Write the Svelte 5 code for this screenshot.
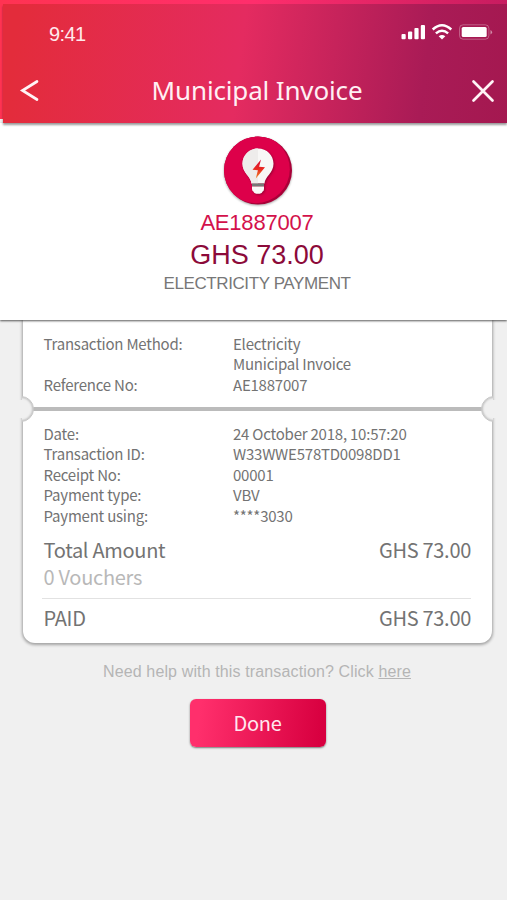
<script>
  let { onBack, onClose, onDone } = $props();

  const invoice = {
    code: 'AE1887007',
    amount: 'GHS 73.00',
    kind: 'ELECTRICITY PAYMENT'
  };

  const method = [
    { label: 'Transaction Method:', lines: ['Electricity', 'Municipal Invoice'] },
    { label: 'Reference No:', lines: ['AE1887007'] }
  ];

  const details = [
    { label: 'Date:', lines: ['24 October 2018, 10:57:20'] },
    { label: 'Transaction ID:', lines: ['W33WWE578TD0098DD1'] },
    { label: 'Receipt No:', lines: ['00001'] },
    { label: 'Payment type:', lines: ['VBV'] },
    { label: 'Payment using:', lines: ['****3030'] }
  ];
</script>

{#snippet rows(items)}
  <dl class="rows">
    {#each items as item}
      <div class="row">
        <dt>{item.label}</dt>
        <dd>
          {#each item.lines as line}
            <span>{line}</span>
          {/each}
        </dd>
      </div>
    {/each}
  </dl>
{/snippet}

<div class="screen">
  <header class="header">
    <div class="header__inner">
      <div class="status">
        <span class="status__time">9:41</span>
        <svg class="status__icons" width="92" height="20" viewBox="0 0 92 20">
          <g fill="#fff">
            <rect x="0.5" y="11" width="4.2" height="5.3" rx="1" />
            <rect x="7" y="8.4" width="4.2" height="7.9" rx="1" />
            <rect x="13.4" y="5" width="4.2" height="11.3" rx="1" />
            <rect x="19.8" y="2" width="4.2" height="14.3" rx="1" />
            <rect x="60.7" y="4" width="25" height="10" rx="1.6" />
            <path d="M89.5 7v4.4q1.6-.7 1.6-2.2T89.5 7z" opacity=".5" />
            <path d="M41 16.500l-3.300-3.300q3.300-2.500 6.600 0z" />
          </g>
          <g fill="none" stroke="#fff" stroke-width="2.5">
            <path d="M31.7 6.5q9.3-8.4 18.600 0" />
            <path d="M34.900 10.400q6.100-5.400 12.200 0" />
          </g>
          <rect x="58.5" y="1.8" width="29.4" height="14.4" rx="3.6" fill="none" stroke="#fff" stroke-opacity=".3" />
        </svg>
      </div>

      <div class="bar">
        <button class="bar__btn" type="button" aria-label="Back" onclick={onBack}>
          <svg width="22" height="24" viewBox="0 0 22 24">
            <path d="M18 2.500L3.500 11.500 18 20.500" />
          </svg>
        </button>
        <h1 class="bar__title">Municipal Invoice</h1>
        <button class="bar__btn" type="button" aria-label="Close" onclick={onClose}>
          <svg width="24" height="24" viewBox="0 0 24 24">
            <path d="M2.500 2.500l19 19M21.500 2.500l-19 19" />
          </svg>
        </button>
      </div>
    </div>
  </header>

  <section class="summary">
    <svg class="summary__icon" width="76" height="76" viewBox="0 0 76 76">
      <defs>
        <clipPath id="disc"><circle cx="38" cy="37.5" r="34" /></clipPath>
        <linearGradient id="bolt" x1="0" y1="1" x2="0" y2="0">
          <stop offset="0" stop-color="#f08a2a" />
          <stop offset=".5" stop-color="#e9281f" />
          <stop offset="1" stop-color="#d80b3a" />
        </linearGradient>
      </defs>
      <circle cx="38" cy="37.5" r="34" fill="#a90038" />
      <circle cx="35.8" cy="36.2" r="34" fill="#dd004a" clip-path="url(#disc)" />
      <g class="summary__bulb">
        <path d="M38 15.500c-8.800 0-15.500 6.700-15.500 15.300 0 9.200 8.500 12.700 9 19.700h13c.5-7 9-10.500 9-19.700 0-8.600-6.700-15.300-15.500-15.300z" fill="#f8f7f6" />
        <path d="M38 15.500c-8.800 0-15.500 6.700-15.500 15.300 0 9.200 8.500 12.700 9 19.700H38z" fill="#eeeceb" />
        <path d="M32 50.500h12v3H32z" fill="#777" />
        <path d="M32 53.500h12v2.500q0 2.300-1.600 2.700-.6 2.100-4.400 2.100t-4.400-2.100Q32 58.300 32 56z" fill="#faf9f8" />
      </g>
      <path d="M41 26.500l-8.500 10.300 5.400.5-2.100 8.200 9.200-11.200-5.900-.6z" fill="url(#bolt)" />
    </svg>
    <p class="summary__code">{invoice.code}</p>
    <p class="summary__amount">{invoice.amount}</p>
    <p class="summary__kind">{invoice.kind}</p>
  </section>

  <main class="ticket">
    <div class="ticket__top">
      {@render rows(method)}
    </div>
    <div class="tear"></div>
    <div class="ticket__bottom">
      {@render rows(details)}
      <div class="total">
        <span>Total Amount</span>
        <span>{invoice.amount}</span>
      </div>
      <p class="vouchers">0 Vouchers</p>
      <div class="total total--paid">
        <span>PAID</span>
        <span>{invoice.amount}</span>
      </div>
    </div>
  </main>

  <p class="help">Need help with this transaction? Click <a href="#help">here</a></p>
  <button class="done" type="button" onclick={onDone}>Done</button>
</div>

<style>
  :global(body) {
    margin: 0;
    background: #f0f0f0;
  }

  .screen {
    display: flex;
    flex-direction: column;
    align-items: center;
    width: 507px;
    height: 900px;
    overflow: hidden;
    background: #f0f0f0;
    font-family: 'Noto Sans CJK SC', 'Noto Sans', sans-serif;
    color: #737373;
  }

  p,
  h1,
  dl,
  dd {
    margin: 0;
  }

  .header {
    z-index: 2;
    box-sizing: border-box;
    width: 100%;
    height: 123px;
    padding: 4px 0 0 3px;
    background: linear-gradient(90deg, #ff3352, #ff2e6c 50%, #c81c60);
    background-size: 100% 119px;
    background-repeat: no-repeat;
  }

  .header__inner {
    height: 119px;
    background: linear-gradient(97deg, #e32c3b 3%, #e42b60 47%, #a91b56 83%, #a41850);
    box-shadow: 0 2px 2px rgba(0, 0, 0, 0.4);
  }

  .status {
    display: flex;
    justify-content: space-between;
    height: 54px;
    padding: 18px 14px 0 46px;
    box-sizing: border-box;
  }

  .status__time {
    font: 20px/24px 'Liberation Sans', Arial, sans-serif;
    letter-spacing: -0.6px;
    color: #ffe9ec;
  }

  .status__icons {
    margin-top: 1px;
  }

  .bar {
    display: flex;
    align-items: center;
    justify-content: space-between;
    height: 66px;
    padding: 0 12px 0 16px;
  }

  .bar__title {
    margin: -2px 0 0 2px;
    font: 400 26px/36px 'Noto Sans', sans-serif;
    letter-spacing: -0.15px;
    color: #fff0f4;
  }

  .bar__btn {
    display: flex;
    padding: 0;
    border: none;
    background: none;
    cursor: pointer;
  }

  .bar__btn path {
    fill: none;
    stroke: #fff4f6;
    stroke-width: 2.7;
    stroke-linecap: round;
  }

  .summary {
    z-index: 1;
    display: flex;
    flex-direction: column;
    align-items: center;
    box-sizing: border-box;
    width: 100%;
    height: 197px;
    padding: 10px 0 0 7px;
    background: #fff;
    box-shadow: 0 1px 2px rgba(0, 0, 0, 0.65);
    font-family: 'Liberation Sans', Arial, sans-serif;
  }

  .summary__icon {
    margin-left: 2px;
    filter: drop-shadow(0 1px 1px rgba(0, 0, 0, 0.35));
  }

  .summary__bulb {
    filter: drop-shadow(1px 1px 1px rgba(90, 0, 30, 0.5));
  }

  .summary__code {
    font-size: 22px;
    line-height: 28px;
    letter-spacing: -0.2px;
    color: #d3114b;
  }

  .summary__amount {
    font-size: 27px;
    line-height: 36px;
    color: #8c0a3a;
  }

  .summary__kind {
    font-size: 17px;
    line-height: 21px;
    letter-spacing: -0.4px;
    color: #777;
  }

  .ticket {
    width: 469px;
    margin-left: 8px;
    border-radius: 0 0 12px 12px;
    background: #fff;
    box-shadow: 0 1px 3px 1px rgba(0, 0, 0, 0.32);
  }

  .ticket__top {
    height: 87px;
    padding: 14px 21px 0 20.5px;
    box-sizing: border-box;
  }

  .tear {
    position: relative;
    height: 4px;
    background: #bbb;
  }

  .tear::before,
  .tear::after {
    content: '';
    position: absolute;
    top: -11px;
    box-sizing: border-box;
    width: 26px;
    height: 26px;
    border: 1px solid #c3c3c3;
    border-radius: 50%;
    background: #f0f0f0;
    box-shadow: inset 0 0 2px 1px #c3c3c3;
  }

  /* the outer part of each circle is cut off so the notch opens onto the page */
  .tear::before {
    left: -15px;
    clip-path: polygon(14px 0, 26px 0, 26px 26px, 14px 26px, 14px 22px, 11px 22px, 11px 4px, 14px 4px);
  }

  .tear::after {
    right: -15px;
    clip-path: polygon(12px 0, 0 0, 0 26px, 12px 26px, 12px 22px, 15px 22px, 15px 4px, 12px 4px);
  }

  .ticket__bottom {
    height: 232px;
    padding: 13px 21px 0 20.5px;
    box-sizing: border-box;
  }

  .rows {
    font-size: 15px;
    line-height: 20.4px;
    letter-spacing: -0.22px;
  }

  .row {
    display: grid;
    grid-template-columns: 189.5px 1fr;
  }

  dd span {
    display: block;
  }

  .total {
    display: flex;
    justify-content: space-between;
    padding-top: 10px;
    font-size: 20px;
    line-height: 28px;
    letter-spacing: -0.3px;
  }

  .vouchers {
    margin-top: -1px;
    font-size: 20px;
    line-height: 27px;
    letter-spacing: -0.3px;
    color: #b8b8b8;
  }

  .total--paid {
    margin: 8px 0 0 -2px;
    padding: 5px 0 0 2px;
    border-top: 1px solid #e2e2e2;
  }

  .help {
    margin: 18px 0 0 7px;
    font: 16px/22px 'Liberation Sans', Arial, sans-serif;
    letter-spacing: 0.13px;
    color: #b5b5b5;
  }

  .help a {
    color: inherit;
  }

  .done {
    width: 136px;
    height: 48px;
    margin: 16px 0 0 8px;
    padding: 0;
    border: none;
    border-radius: 6px;
    background: linear-gradient(97deg, #ff2f6c 8%, #d80040 95%);
    box-shadow: 0 1px 2px rgba(0, 0, 0, 0.5);
    font: 20px/28px 'Noto Sans CJK SC', 'Noto Sans', sans-serif;
    letter-spacing: -0.3px;
    color: #ffe8ef;
    cursor: pointer;
  }
</style>
